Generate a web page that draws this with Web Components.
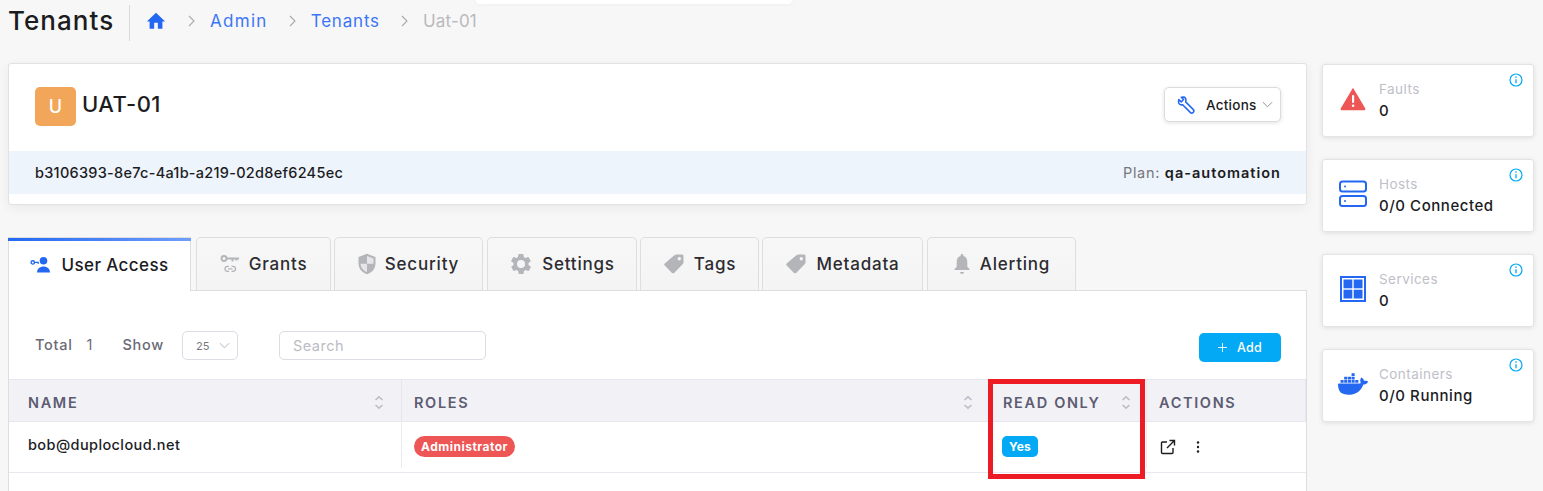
<!DOCTYPE html>
<html lang="en"><head><meta charset="utf-8"><title>Tenants</title>
<style>
html,body{margin:0;height:491px;overflow:hidden;background:#f7f7f7}
body{font-family:Inter,"Noto Sans",sans-serif;color:#1c1c1f}
</style></head><body>
<tenant-page></tenant-page>
<script>
const I={
home:'<svg viewBox="0 0 24 24" width="24" height="24" fill="#2468f2"><path d="M10 20.500v-6.500h4v6.500h5v-8h3L12 3 2 12.500h3v8z"/></svg>',
wrench:'<svg viewBox="0 0 24 24" width="20" height="20" fill="none" stroke="#2468f2" stroke-width="1.900" stroke-linejoin="round"><path d="M9.500 2.500 6.300 2.600l2.700 2.800-2.700 2.900L3.400 5.500 3 8.700c.2 2.200 2.600 3.700 5 3l9.400 9.400c.8.800 2.100.800 2.900 0l.6-.6c.8-.8.800-2.100 0-2.900l-9.300-9.400c.6-2.500-.4-5-2.100-5.700z"/></svg>',
warn:'<svg viewBox="0 0 26 24" width="26" height="24"><path d="M13 .8 25.300 21.600c.4.800 0 1.600-1 1.600H1.700c-1 0-1.400-.8-1-1.600z" fill="#ee5555"/><rect x="12" y="8" width="2.200" height="8" rx="1" fill="#fff"/><circle cx="13.100" cy="18.700" r="1.300" fill="#fff"/></svg>',
hosts:'<svg viewBox="0 0 28 28" width="28" height="28" fill="none" stroke="#2468f2" stroke-width="2"><rect x="1" y="1.500" width="26" height="10" rx="2.500"/><rect x="1" y="16" width="26" height="10" rx="2.500"/><circle cx="6" cy="6.500" r="1" fill="#2468f2" stroke="none"/><circle cx="6" cy="21" r="1" fill="#2468f2" stroke="none"/></svg>',
services:'<svg viewBox="0 0 26 26" width="26" height="26"><rect width="26" height="26" fill="#2468f2"/><g fill="#fff"><rect x="2" y="2" width="22" height="22"/></g><g fill="#2468f2"><rect x="3.500" y="3.500" width="8.800" height="8.800"/><rect x="13.700" y="3.500" width="8.800" height="8.800"/><rect x="3.500" y="13.700" width="8.800" height="8.800"/><rect x="13.700" y="13.700" width="8.800" height="8.800"/></g></svg>',
docker:'<svg viewBox="0 0 24 24" width="30" height="30" fill="#2468f2"><path d="M13.983 11.078h2.119a.186.186 0 00.186-.185V9.006a.186.186 0 00-.186-.186h-2.119a.185.185 0 00-.185.185v1.888c0 .102.083.185.185.185m-2.954-5.43h2.118a.186.186 0 00.186-.186V3.574a.186.186 0 00-.186-.185h-2.118a.185.185 0 00-.185.185v1.888c0 .102.082.185.185.186m0 2.716h2.118a.187.187 0 00.186-.186V6.29a.186.186 0 00-.186-.185h-2.118a.185.185 0 00-.185.185v1.887c0 .102.082.185.185.186m-2.93 0h2.12a.186.186 0 00.184-.186V6.29a.185.185 0 00-.185-.185H8.100a.185.185 0 00-.185.185v1.887c0 .102.083.185.185.186m-2.964 0h2.119a.186.186 0 00.185-.186V6.29a.185.185 0 00-.185-.185H5.136a.186.186 0 00-.186.185v1.887c0 .102.084.185.186.186m5.893 2.715h2.118a.186.186 0 00.186-.185V9.006a.186.186 0 00-.186-.186h-2.118a.185.185 0 00-.185.185v1.888c0 .102.082.185.185.185m-2.93 0h2.12a.185.185 0 00.184-.185V9.006a.185.185 0 00-.184-.186h-2.120a.185.185 0 00-.184.185v1.888c0 .102.083.185.185.185m-2.964 0h2.119a.185.185 0 00.185-.185V9.006a.185.185 0 00-.185-.186h-2.120a.186.186 0 00-.185.186v1.887c0 .102.084.185.186.185m-2.920 0h2.120a.185.185 0 00.184-.185V9.006a.185.185 0 00-.184-.186h-2.120a.185.185 0 00-.184.186v1.887c0 .102.082.185.185.185M23.763 9.890c-.065-.051-.672-.510-1.954-.510-.338.001-.676.030-1.010.087-.248-1.700-1.653-2.530-1.716-2.566l-.344-.199-.226.327c-.284.438-.490.922-.612 1.430-.230.970-.090 1.882.403 2.661-.595.332-1.550.413-1.744.420H.751a.751.751 0 00-.750.748 11.376 11.376 0 00.692 4.062c.545 1.428 1.355 2.480 2.410 3.124 1.180.723 3.100 1.137 5.275 1.137.983.003 1.963-.086 2.930-.266a12.248 12.248 0 003.823-1.389c.980-.567 1.860-1.288 2.610-2.136 1.252-1.418 1.998-2.997 2.553-4.400h.221c1.372 0 2.215-.549 2.680-1.009.309-.293.550-.650.707-1.046l.098-.288Z"/></svg>',
info:'<svg viewBox="0 0 14 14" width="14" height="14" fill="none" stroke="#03a9f4" stroke-width="1.200"><circle cx="7" cy="7" r="6"/><path d="M7 6.300v4" stroke-width="1.300"/><circle cx="7" cy="4.100" r=".8" fill="#03a9f4" stroke="none"/></svg>',
user:'<svg viewBox="0 0 22 18" width="22" height="18" fill="#2468f2"><circle cx="13.500" cy="4.800" r="3.800"/><path d="M7 16.500c0-3.700 3-6 6.500-6s6.500 2.300 6.500 6z"/><circle cx="2.800" cy="6.400" r="1.700" fill="none" stroke="#2468f2" stroke-width="1.400"/><path d="M4.500 5.700h4.300v2.200H7.600V6.900H4.500z"/></svg>',
grants:'<svg viewBox="0 0 20 20" width="20" height="20" fill="none" stroke="#b4b5b9" stroke-width="1.900"><circle cx="4" cy="4.500" r="2.500"/><path d="M6.500 4.500H19M12.500 4.500v3M16.500 4.500v2"/><path d="M9 12.300H7.500a2.500 2.500 0 0 0 0 5H9M11.500 12.300H13a2.500 2.500 0 0 1 0 5h-1.500M8 14.800h4.500" stroke-width="1.300"/></svg>',
shield:'<svg viewBox="0 0 18 22" width="18" height="22"><path d="M9 .8 17.500 4v6.500c0 5-3.500 9.200-8.500 10.700C4 19.700.5 15.500.5 10.500V4z" fill="#b4b5b9"/><path d="M9 3 15.500 5.400V10.800H9zM9 10.800H2.500C2.800 14.500 5.300 17.800 9 19.100z" fill="#e6e6e8"/></svg>',
gear:'<svg viewBox="0 0 24 24" width="24" height="24" fill="#b4b5b9"><path fill-rule="evenodd" d="M19.400 13c.1-.3.100-.7.100-1s0-.7-.1-1l2.100-1.600c.2-.2.200-.4.100-.6l-2-3.500c-.1-.2-.4-.3-.6-.2l-2.500 1c-.5-.4-1.100-.7-1.700-1l-.4-2.700c0-.2-.2-.4-.5-.4h-4c-.2 0-.4.200-.5.400l-.4 2.700c-.6.300-1.200.6-1.700 1l-2.500-1c-.2-.1-.5 0-.6.200l-2 3.500c-.1.200-.1.500.1.600L4.600 11c-.1.300-.1.700-.1 1s0 .7.100 1l-2.100 1.600c-.2.200-.2.400-.1.600l2 3.500c.1.200.4.300.6.200l2.500-1c.5.400 1.100.7 1.700 1l.4 2.700c0 .2.200.4.500.4h4c.2 0 .4-.2.500-.4l.4-2.700c.6-.3 1.200-.6 1.700-1l2.500 1c.2.100.5 0 .6-.2l2-3.500c.1-.2.100-.5-.1-.6zM12 16a4 4 0 1 1 0-8 4 4 0 0 1 0 8z"/></svg>',
tag:'<svg viewBox="0 0 22 22" width="22" height="22"><path fill-rule="evenodd" fill="#b4b5b9" d="M12.500 1.500h6.500c.9 0 1.500.6 1.500 1.500v6.500c0 .5-.2 1-.6 1.400l-8.800 9c-.6.600-1.500.600-2.100 0l-7.300-7.400c-.6-.6-.6-1.500 0-2.100l9.300-8c.4-.2.800-.4 1.500-.4zm3.800 2.500a1.700 1.700 0 1 0 0 3.400 1.700 1.700 0 0 0 0-3.400z"/></svg>',
bell:'<svg viewBox="0 0 18 22" width="18" height="22" fill="#b4b5b9"><path d="M9 1c.8 0 1.400.6 1.400 1.400v.6c2.600.7 3.900 3 3.900 5.700v5l2.200 2.300v1.100H1.500V16l2.200-2.300v-5c0-2.700 1.300-5 3.900-5.700v-.6C7.600 1.600 8.200 1 9 1zM7 18.900h4a2 2 0 0 1-4 0z"/></svg>',
sort:'<svg viewBox="0 0 10 15" width="10" height="15" fill="none" stroke="#bdbdc9" stroke-width="1.600"><path d="M1.500 5 5 1.800 8.500 5M1.500 10 5 13.200 8.500 10"/></svg>',
open:'<svg viewBox="0 0 16 16" width="16" height="16" fill="none" stroke="#1c1c1f" stroke-width="1.400"><path d="M7 3H2.500A1 1 0 0 0 1.500 4v9.500a1 1 0 0 0 1 1H12a1 1 0 0 0 1-1V9M9.500 1.500h5v5M14.500 1.500 7 9"/></svg>',
dots:'<svg viewBox="0 0 4 14" width="4" height="14" fill="#1c1c1f"><circle cx="2" cy="2.500" r="1.200"/><circle cx="2" cy="7" r="1.200"/><circle cx="2" cy="11.500" r="1.200"/></svg>',
chev:'<svg viewBox="0 0 7 12" width="7" height="12" fill="none" stroke="#a9a9ad" stroke-width="1.100"><path d="M1 1l5 5-5 5"/></svg>',
down:'<svg viewBox="0 0 12 7" width="11" height="7" fill="none" stroke="#8a8a90" stroke-width="1"><path d="M1 1l5 5 5-5"/></svg>'
};
function def(name,html){customElements.define(name,class extends HTMLElement{constructor(){super();this.attachShadow({mode:'open'}).innerHTML=html;}})}

def('crumb-bar',`<style>
:host{display:flex;align-items:center;height:46px}
h1{margin:0;font:500 26px/32px Inter,sans-serif;letter-spacing:1.050px;color:#1c1c1f;width:121px;height:36px;border-right:1px solid #d5dae2;flex:none}
.home{margin-left:15px;display:flex;width:22px;margin-bottom:4px}
.c{display:flex;margin-left:21px;margin-right:15px;margin-bottom:4px}
a,span.cur{font:400 17px/24px Inter,sans-serif;margin-bottom:4px}
a{color:#3b76f6}
.a1{letter-spacing:1.300px}.a2{letter-spacing:.8px}
.cur{letter-spacing:.2px;color:#b9b9bd}
</style><h1>Tenants</h1><span class="home">${I.home}</span>
<span class="c">${I.chev}</span><a class="a1">Admin</a><span class="c">${I.chev}</span><a class="a2">Tenants</a><span class="c">${I.chev}</span><span class="cur">Uat-01</span>`);

def('tenant-card',`<style>
:host{display:block;background:#fff;border:1px solid #e2e2e4;border-radius:3px;height:142px;box-shadow:0 3px 12px rgba(0,0,0,.06);box-sizing:border-box}
.top{display:flex;align-items:center;height:87px;padding:0 25px 2px 26px;box-sizing:border-box}
.av{width:41px;height:39px;background:#f2a65a;border-radius:5px;color:#fff;font:500 18px/39px Inter,sans-serif;text-align:center;flex:none}
h2{margin:0 0 0 6px;font:500 22px/30px Inter,sans-serif;letter-spacing:.5px;position:relative;top:-3px;flex:1}
button{display:flex;align-items:center;height:35px;width:117px;box-sizing:border-box;padding:0 0 0 11px;margin-bottom:4px;background:#fff;border:1px solid #dcdcdf;border-radius:5px;box-shadow:0 1px 4px rgba(0,0,0,.12);font:500 13.500px/20px Inter,sans-serif;color:#1c1c1f;letter-spacing:.25px}
button b{font-weight:500;margin-left:10px;margin-right:5px}
.band{display:flex;justify-content:space-between;align-items:center;background:#edf4fb;height:43px;padding:0 25px 0 26px;font:500 14.500px/20px Inter,sans-serif;letter-spacing:.27px}
.plan{color:#77777c;font-weight:400;letter-spacing:.7px}.plan b{color:#1c1c1f;font-weight:600;letter-spacing:1px}
</style><div class="top"><div class="av">U</div><h2>UAT-01</h2><button>${I.wrench}<b>Actions</b>${I.down}</button></div>
<div class="band"><span>b3106393-8e7c-4a1b-a219-02d8ef6245ec</span><span class="plan">Plan: <b>qa-automation</b></span></div>`);

def('stat-card',`<style>
:host{display:flex;align-items:center;position:relative;background:#fff;border:1px solid #e4e4e6;border-radius:3px;height:73px;box-sizing:border-box;box-shadow:0 1px 5px rgba(0,0,0,.1);padding-left:10px}
.ic{width:40px;display:flex;justify-content:center;flex:none;margin-right:6px}
.l{font:400 13.500px/20px Inter,sans-serif;letter-spacing:.45px;color:#c0c0c8}
.v{font:500 15px/24px Inter,sans-serif;letter-spacing:.55px;color:#1c1c1f;white-space:nowrap}
.i{position:absolute;right:10px;top:8px;display:flex}
</style><div class="ic"><slot name="icon"></slot></div><div class="t"><div class="l"><slot name="label"></slot></div><div class="v"><slot></slot></div></div><span class="i">${I.info}</span>`);

def('tab-item',`<style>
:host{display:flex;align-items:center;justify-content:center;gap:9px;box-sizing:border-box;height:53px;background:linear-gradient(#f7f7f7,#f4f4f5);border:1px solid #dedee0;border-bottom:0;border-radius:5px 5px 0 0;font:500 17px/24px Inter,sans-serif;letter-spacing:.8px;color:#2c2c30;flex:none;white-space:nowrap}
:host([active]){background:#fff;border-color:#dedee0;border-radius:0;height:54px;margin-bottom:-1px;z-index:1;position:relative;color:#1c1c1f;letter-spacing:.4px}
:host([active])::before{content:"";position:absolute;left:-1px;right:-1px;top:0;height:3px;background:linear-gradient(90deg,#2468f2,#6f9dfa)}
::slotted(svg){display:block;flex:none}
</style><slot></slot>`);

def('tab-strip',`<style>:host{display:flex;gap:3px;align-items:flex-end;height:53px}</style><slot></slot>`);

def('tool-bar',`<style>
:host{display:flex;align-items:center;height:31px;padding:0 25px 0 26px;font:500 14.500px/20px Inter,sans-serif;color:#6a6a76;letter-spacing:.7px}
.t{margin-bottom:2px}
.n{font-weight:400;margin-left:14px;width:36px;margin-bottom:2px}
.sel{box-sizing:border-box;width:56px;height:29px;margin-left:18px;border:1px solid #dcdce4;border-radius:5px;display:flex;align-items:center;gap:9px;padding-left:13px;font:400 11px/16px Inter,sans-serif;color:#77777f;background:#fff;letter-spacing:.2px}
.q{box-sizing:border-box;width:207px;height:29px;margin-left:41px;border:1px solid #dcdce4;border-radius:5px;padding-left:13px;display:flex;align-items:center;font:400 14.500px/20px Inter,sans-serif;color:#bcbcc4;background:#fff;letter-spacing:.5px}
.add{margin-left:auto;display:flex;align-items:center;justify-content:center;gap:10px;width:82px;height:29px;background:#03a9f4;color:#fff;border-radius:5px;font:500 12.500px/16px Inter,sans-serif;margin-top:4px;letter-spacing:.2px}
</style><span class="t">Total</span><span class="n">1</span><span class="t">Show</span><span class="sel">25 ${I.down.replace('#8a8a90','#b0b0b8')}</span><span class="q">Search</span><span class="add"><svg viewBox="0 0 10 10" width="9" height="9" fill="none" stroke="#fff" stroke-width="1"><path d="M5 0v10M0 5h10"/></svg>Add</span>`);

def('access-table',`<style>
:host{display:block;margin-top:18px}
.g{display:grid;grid-template-columns:393px 589px 156px 1fr}
.h{height:43px;box-sizing:border-box;background:#f1f1f6;border-top:1px solid #e6e6ee;border-bottom:1px solid #e6e6ee;display:flex;align-items:center;justify-content:space-between;font:600 14.500px/20px Inter,sans-serif;letter-spacing:1.650px;color:#5d5c72;padding:4px 17px 0 19px;border-right:1px solid #e6e6ee}
.h:nth-child(n+2){padding-left:12px}.h:nth-child(3){padding-right:15px}.h:last-of-type{border-right:0}
.c{height:51px;box-sizing:border-box;display:flex;align-items:center;padding:0 0 5px 19px;position:relative;font:500 14.500px/20px Inter,sans-serif;letter-spacing:.4px;border-bottom:1px solid #e8e8ee}
.c:nth-child(n+6){padding-left:12px}
.c:not(:last-child)::after{content:"";position:absolute;right:0;top:0;bottom:4px;width:1px;background:#eaeaf0}
.b{display:inline-block;color:#fff;font:700 12px/21px Inter,sans-serif;border-radius:11px;padding:0 7px;letter-spacing:.5px;margin-top:3px}
.red{background:#ee5555}.blue{background:#03a9f4;border-radius:5px;letter-spacing:.2px;margin-left:-1px}
.acts{display:flex;align-items:center;gap:20px;padding-top:4px;margin-left:1px}svg{display:block}
</style><div class="g">
<div class="h">NAME${I.sort}</div><div class="h">ROLES${I.sort}</div><div class="h">READ ONLY${I.sort}</div><div class="h">ACTIONS</div>
<div class="c">bob@duplocloud.net</div><div class="c"><span class="b red">Administrator</span></div><div class="c"><span class="b blue">Yes</span></div><div class="c"><span class="acts">${I.open}${I.dots}</span></div>
</div>`);

def('highlight-box',`<style>:host{position:absolute;left:988px;top:379px;width:157px;height:100px;box-sizing:border-box;border:5px solid #ed1c24;z-index:5}</style>`);

def('tenant-page',`<style>
:host{display:block;position:relative;height:491px;overflow:hidden}
.sliver{position:absolute;left:476px;top:0;width:316px;height:4px;background:#fff;border-radius:0 0 4px 4px;box-shadow:0 0 4px rgba(0,0,0,.05)}
.wrap{padding:0 9px 0 8px}
.main{display:grid;grid-template-columns:1299px 212px;column-gap:15px;margin-top:17px}
.stats{display:flex;flex-direction:column;gap:22px;margin-top:1px}
.left{min-width:0}
.panel{background:#fff;border:1px solid #dedee0;border-bottom:0;height:202px;box-sizing:border-box;padding-top:39px}
tab-strip{margin-top:32px}
</style><div class="sliver"></div><div class="wrap"><crumb-bar></crumb-bar>
<div class="main"><div class="left"><tenant-card></tenant-card>
<tab-strip>
<tab-item active style="width:183px;margin-right:2px">${I.user}User Access</tab-item>
<tab-item style="width:135px">${I.grants}Grants</tab-item>
<tab-item style="width:149px;margin-right:1px">${I.shield}Security</tab-item>
<tab-item style="width:150px">${I.gear}Settings</tab-item>
<tab-item style="width:119px">${I.tag}Tags</tab-item>
<tab-item style="width:161px;margin-right:1px">${I.tag}Metadata</tab-item>
<tab-item style="width:149px">${I.bell}Alerting</tab-item>
</tab-strip>
<div class="panel"><tool-bar></tool-bar><access-table></access-table></div></div>
<div class="stats">
<stat-card><span slot="icon">${I.warn}</span><span slot="label">Faults</span>0</stat-card>
<stat-card><span slot="icon">${I.hosts}</span><span slot="label">Hosts</span>0/0 Connected</stat-card>
<stat-card><span slot="icon">${I.services}</span><span slot="label">Services</span>0</stat-card>
<stat-card><span slot="icon">${I.docker}</span><span slot="label">Containers</span>0/0 Running</stat-card>
</div></div></div><highlight-box></highlight-box>`);
</script></body></html>
